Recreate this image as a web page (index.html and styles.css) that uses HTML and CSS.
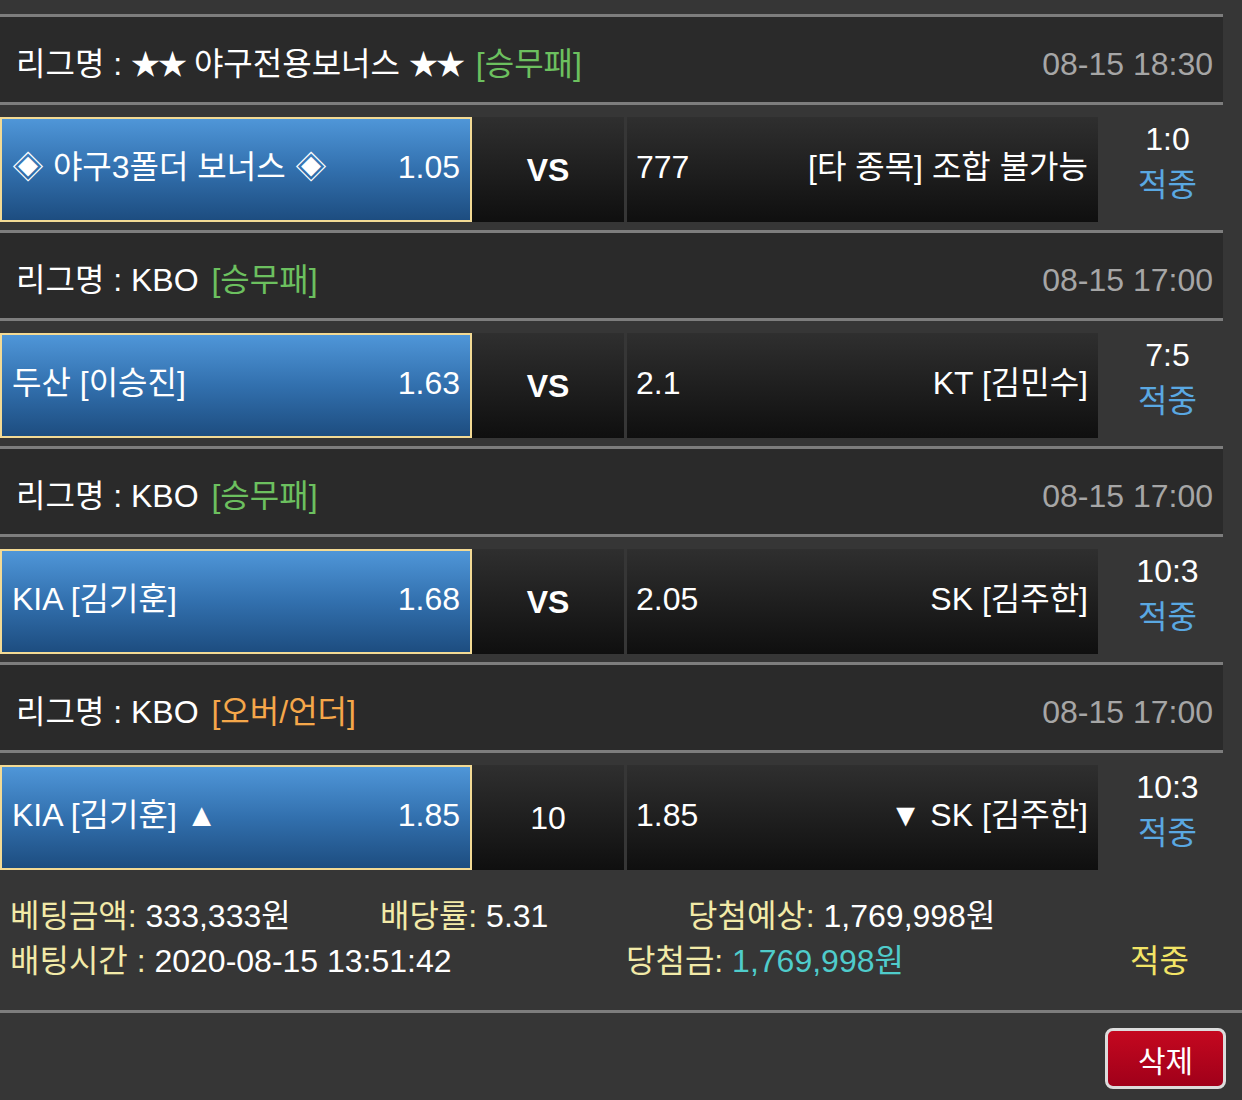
FILE: index.html
```html
<!DOCTYPE html>
<html lang="ko">
<head>
    <meta charset="UTF-8">
    <meta name="viewport" content="width=device-width, initial-scale=1.0">
    <title>베팅내역</title>
    <link rel="stylesheet" href="styles.css">
</head>
<body>
    <div class="bet-slip">
        <div class="league">
            <div class="league-name">리그명 : <span class="stars">★★</span> 야구전용보너스 <span class="stars">★★</span> <span class="tag tag-win">[승무패]</span></div>
            <div class="league-date">08-15 18:30</div>
        </div>
        <div class="match">
            <div class="team home picked">
                <span>◈ 야구3폴더 보너스 ◈</span>
                <span>1.05</span>
            </div>
            <div class="center vs">VS</div>
            <div class="team away">
                <span>777</span>
                <span>[타 종목] 조합 불가능</span>
            </div>
            <div class="result">
                <div class="score">1:0</div>
                <div class="status">적중</div>
            </div>
        </div>

        <div class="league">
            <div class="league-name">리그명 : KBO <span class="tag tag-win">[승무패]</span></div>
            <div class="league-date">08-15 17:00</div>
        </div>
        <div class="match">
            <div class="team home picked">
                <span>두산 [이승진]</span>
                <span>1.63</span>
            </div>
            <div class="center vs">VS</div>
            <div class="team away">
                <span>2.1</span>
                <span>KT [김민수]</span>
            </div>
            <div class="result">
                <div class="score">7:5</div>
                <div class="status">적중</div>
            </div>
        </div>

        <div class="league">
            <div class="league-name">리그명 : KBO <span class="tag tag-win">[승무패]</span></div>
            <div class="league-date">08-15 17:00</div>
        </div>
        <div class="match">
            <div class="team home picked">
                <span>KIA [김기훈]</span>
                <span>1.68</span>
            </div>
            <div class="center vs">VS</div>
            <div class="team away">
                <span>2.05</span>
                <span>SK [김주한]</span>
            </div>
            <div class="result">
                <div class="score">10:3</div>
                <div class="status">적중</div>
            </div>
        </div>

        <div class="league">
            <div class="league-name">리그명 : KBO <span class="tag tag-ou">[오버/언더]</span></div>
            <div class="league-date">08-15 17:00</div>
        </div>
        <div class="match">
            <div class="team home picked">
                <span>KIA [김기훈] ▲</span>
                <span>1.85</span>
            </div>
            <div class="center">10</div>
            <div class="team away">
                <span>1.85</span>
                <span>▼ SK [김주한]</span>
            </div>
            <div class="result">
                <div class="score">10:3</div>
                <div class="status">적중</div>
            </div>
        </div>
    </div>

    <div class="summary">
        <div class="summary-row">
            <div class="col col-amount"><span class="label">베팅금액:</span> 333,333원</div>
            <div class="col col-rate"><span class="label">배당률:</span> 5.31</div>
            <div class="col"><span class="label">당첨예상:</span> 1,769,998원</div>
        </div>
        <div class="summary-row">
            <div class="col col-time"><span class="label">배팅시간 :</span> 2020-08-15 13:51:42</div>
            <div class="col col-prize"><span class="label">당첨금:</span> <span class="prize">1,769,998원</span></div>
            <div class="col hit">적중</div>
        </div>
    </div>

    <div class="actions">
        <button class="delete-btn">삭제</button>
    </div>
</body>
</html>
```

FILE: styles.css
```css
* {
    margin: 0;
    padding: 0;
    box-sizing: border-box;
}

body {
    font-family: "Liberation Sans", "Noto Sans CJK KR", sans-serif;
    font-size: 32px;
    background: #363636;
    color: #fff;
    padding-top: 14px;
}

.bet-slip {
    width: 1223px;
}

.league {
    height: 91px;
    background: #2a2a2a;
    border-top: 3px solid #7d7d7d;
    border-bottom: 3px solid #7d7d7d;
    display: flex;
    align-items: center;
    justify-content: space-between;
    padding: 8px 10px 0 16px;
    line-height: 1;
}

.stars {
    font-size: 29px;
    letter-spacing: -2px;
}

.tag {
    margin-left: 4px;
}

.tag-win {
    color: #6cc05f;
}

.tag-ou {
    color: #f5a74a;
}

.league-date {
    color: #a6a6a6;
}

.match {
    display: flex;
    padding: 12px 0 8px;
    height: 125px;
    line-height: 1;
}

.team {
    width: 471px;
    display: flex;
    align-items: center;
    justify-content: space-between;
    background: linear-gradient(#2f2f2f, #0f0f0f);
}

.home {
    padding: 0 10px 5px 10px;
}

.away {
    padding: 0 10px 5px 9px;
}

.picked {
    width: 472px;
    background: linear-gradient(#4f96d8, #3270ae 50%, #1d4d80);
    border: 2px solid #f3da94;
}

.center {
    width: 152px;
    margin-right: 3px;
    display: flex;
    align-items: center;
    justify-content: center;
    background: linear-gradient(#2f2f2f, #0f0f0f);
}

.vs {
    font-weight: bold;
}

.result {
    width: 125px;
    display: flex;
    flex-direction: column;
    align-items: center;
    justify-content: center;
    gap: 14px;
    padding: 0 0 16px 14px;
}

.status {
    color: #5aa8e2;
}

.summary {
    padding: 12px 0 30px 10px;
    border-bottom: 3px solid #7d7d7d;
}

.summary-row {
    display: flex;
    height: 45px;
    align-items: center;
}

.label {
    color: #f2eaa8;
}

.col-amount {
    width: 370px;
}

.col-rate {
    width: 308px;
}

.col-time {
    width: 616px;
}

.col-prize {
    width: 504px;
}

.prize {
    color: #4fcccb;
}

.hit {
    color: #f2e466;
}

.actions {
    display: flex;
    justify-content: flex-end;
    padding: 15px 16px 0 0;
}

.delete-btn {
    width: 121px;
    height: 61px;
    font-family: inherit;
    font-size: 30px;
    color: #fff;
    background: linear-gradient(#c4081f, #a0001a);
    border: 3px solid #dcdcdc;
    border-radius: 8px;
    cursor: pointer;
}
```
